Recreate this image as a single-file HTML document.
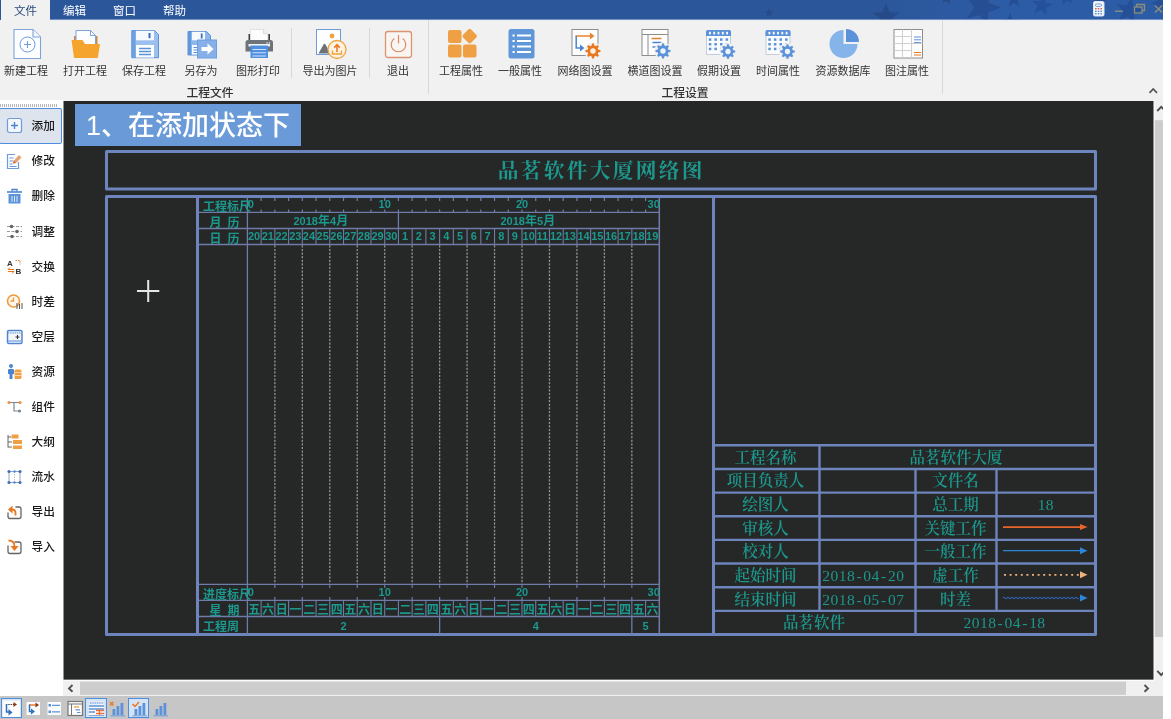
<!DOCTYPE html><html lang="zh"><head><meta charset="utf-8"><title>品茗软件大厦网络图</title><style>
html,body{margin:0;padding:0;background:#fff;}
body{width:1171px;height:719px;overflow:hidden;position:relative;font-family:"Liberation Sans","Noto Sans CJK SC",sans-serif;}
.abs{position:absolute;}
#app{position:absolute;left:0;top:0;width:1163px;height:719px;overflow:hidden;background:#f1f1f1;will-change:transform;}
#topbar{position:absolute;left:0;top:0;width:1163px;height:20px;background:linear-gradient(90deg,#2b569a 0,#2b569a 880px,#2d5ca6 1000px,#2d5ca6 1163px);overflow:hidden;}
.menu{position:absolute;top:0.5px;height:20px;line-height:20px;font-size:11.5px;color:#fff;white-space:nowrap;}
#tabfile{position:absolute;left:1px;top:0;width:49px;height:21px;background:#f1f1f1;color:#2a4a7c;text-align:center;line-height:22px;font-size:11.5px;}
#ribbon{position:absolute;left:0;top:20px;width:1163px;height:80px;background:#f1f1f1;}
.rb{position:absolute;top:0;width:80px;margin-left:-40px;text-align:center;}
.rb .lb{position:absolute;left:0;width:80px;top:44px;font-size:11px;color:#333;line-height:14px;text-align:center;white-space:nowrap;}
.rb svg{position:absolute;left:24.5px;top:8px;}
.grp{position:absolute;top:65.5px;font-size:11.8px;font-weight:500;color:#333;line-height:14px;white-space:nowrap;transform:translateX(-50%);}
.sep{position:absolute;width:1px;background:#d8d8d8;}
#side{position:absolute;left:0;top:100px;width:63px;height:596px;background:#fff;}
.si{position:absolute;left:0;width:62px;height:35px;}
.si .t{position:absolute;left:31.5px;top:11px;font-size:11.7px;line-height:14px;color:#1a1a1a;font-weight:500;white-space:nowrap;}
.si svg{position:absolute;left:6px;top:9.2px;}
#canvas{position:absolute;left:63px;top:101px;width:1090.7px;height:578.5px;background:#262727;overflow:hidden;}
#bottom{position:absolute;left:0;top:696px;width:1163px;height:23px;background:#c6c6c6;}
</style></head><body><div id="app">
<div id="topbar">
<svg class="abs" style="left:0;top:0" width="1163" height="20" viewBox="0 0 1163 20">
<polygon points="769,8.3 770.1,11.3 773.3,11.4 770.8,13.4 771.6,16.4 769,14.7 766.4,16.4 767.2,13.4 764.7,11.4 767.9,11.3" fill="#264b87"/>
<polygon points="886,3 889.5,12.2 899.3,12.7 891.6,18.8 894.2,28.3 886,22.9 877.8,28.3 880.4,18.8 872.7,12.7 882.5,12.2" fill="#264b88"/>
<polygon points="948.2,-8.9 949.1,-4 953.9,-3 949.6,-0.6 950.1,4.3 946.5,0.9 942,2.9 944.1,-1.6 940.8,-5.3 945.7,-4.6" fill="#264b88"/>
<polygon points="987.9,-10.6 988.5,2.8 1001,7.5 988.5,12.2 987.9,25.6 979.5,15.1 966.6,18.7 974,7.5 966.6,-3.7 979.5,-0.1" fill="#254e93"/>
<polygon points="1014,-10 1016.2,-4.1 1022.6,-3.8 1017.6,0.2 1019.3,6.3 1014,2.8 1008.7,6.3 1010.4,0.2 1005.4,-3.8 1011.8,-4.1" fill="#254e93"/>
<polygon points="1043.9,-5.2 1045.3,2.4 1052.9,4.1 1046.1,7.8 1046.8,15.5 1041.2,10.1 1034.1,13.2 1037.4,6.2 1032.3,0.4 1040,1.4" fill="#25509a"/>
<polygon points="1064.4,-11.9 1067.7,-6.4 1073.9,-7.2 1069.7,-2.5 1072.5,3.3 1066.7,0.7 1062.1,5.1 1062.7,-1.2 1057.1,-4.3 1063.3,-5.6" fill="#25509a"/>
<polygon points="1101,-12 1103,-4.5 1110.7,-3.5 1104.3,0.8 1105.7,8.4 1099.6,3.6 1092.8,7.3 1095.5,0 1089.9,-5.3 1097.6,-5" fill="#254f96"/>
<polygon points="1131.9,-2.7 1133.4,7.1 1142.9,9.5 1134.1,13.9 1134.7,23.8 1127.8,16.8 1118.6,20.4 1123.2,11.6 1116.9,4 1126.6,5.6" fill="#254f96"/>
<polygon points="1158.7,-4.9 1161.8,0.7 1168.1,0.1 1163.7,4.7 1166.3,10.5 1160.5,7.7 1155.8,11.9 1156.6,5.7 1151.1,2.4 1157.4,1.3" fill="#254f96"/>
<polygon points="1010,13 1012.2,18.9 1018.6,19.2 1013.6,23.2 1015.3,29.3 1010,25.8 1004.7,29.3 1006.4,23.2 1001.4,19.2 1007.8,18.9" fill="#254e93"/>
</svg>
<div id="tabfile">文件</div>
<div class="menu" style="left:63px">编辑</div>
<div class="menu" style="left:113px">窗口</div>
<div class="menu" style="left:163px">帮助</div>
<svg class="abs" style="left:1090px;top:0" width="73" height="20" viewBox="0 0 73 20"><rect x="3.5" y="1.5" width="10.5" height="14.5" rx="1.5" fill="#f4f6fa" stroke="#dfe6f2" stroke-width="1"/><rect x="5.5" y="4" width="6" height="2.4" rx="1" fill="#fff" stroke="#5b8fd6" stroke-width="0.9"/><g fill="#d0664a"><rect x="5" y="8" width="1.6" height="1.4"/><rect x="7.7" y="8" width="1.6" height="1.4"/><rect x="10.4" y="8" width="1.6" height="1.4"/></g><g fill="#5b8fd6"><rect x="5" y="10.6" width="1.6" height="1.4"/><rect x="7.7" y="10.6" width="1.6" height="1.4"/><rect x="10.4" y="10.6" width="1.6" height="1.4"/><rect x="5" y="13" width="1.6" height="1.4"/><rect x="7.7" y="13" width="1.6" height="1.4"/><rect x="10.4" y="13" width="1.6" height="1.4"/></g><rect x="25" y="10.5" width="8" height="1.4" fill="#8b8d7a"/><rect x="44.5" y="7" width="7.5" height="6" fill="none" stroke="#8b8d7a" stroke-width="1.3"/><path d="M46.5 7V4.5H54.5V10.5H52" fill="none" stroke="#8b8d7a" stroke-width="1.3"/><path d="M65 5.5l7 7M72 5.5l-7 7" stroke="#8b8d7a" stroke-width="1.5" fill="none"/></svg>
</div>
<div id="ribbon">
<div class="rb" style="left:26px"><svg width="32" height="32" viewBox="0 0 32 32"><path d="M3 1.5H22L29.5 9V30.5H3Z" fill="#fdfeff" stroke="#7fa3d8" stroke-width="1.1"/><path d="M22 1.5V9H29.5" fill="#f4f8fd" stroke="#7fa3d8" stroke-width="1.1"/><circle cx="16.5" cy="16.5" r="7.5" fill="none" stroke="#6f9bd8" stroke-width="1"/><path d="M16.5 13v7M13 16.5h7" stroke="#6f9bd8" stroke-width="1.1"/></svg><div class="lb">新建工程</div></div>
<div class="rb" style="left:85px"><svg width="32" height="32" viewBox="0 0 32 32"><path d="M4 8H6V19H4Z" fill="#c98a45"/><path d="M25.5 8H27.5V19H25.5Z" fill="#c98a45"/><path d="M6 2.5H20.5L25.5 7.5V20H6Z" fill="#fdfeff" stroke="#7fa3d8" stroke-width="1"/><path d="M20.5 2.5V7.5H25.5" fill="none" stroke="#7fa3d8" stroke-width="1"/><path d="M1.5 12H12.5L15 16H30L27.8 30H4Z" fill="#f5a52d"/></svg><div class="lb">打开工程</div></div>
<div class="rb" style="left:144px"><svg width="32" height="32" viewBox="0 0 32 32"><path d="M2.8 2.5H25.5L29.5 6.5V29.7H2.8Z" fill="#9cc0ee" stroke="#5b92d9" stroke-width="1"/><path d="M2.8 2.5H6.5V29.7H2.8Z" fill="#6a9fe0"/><rect x="7" y="2.8" width="18" height="9.5" fill="#f6f9fe"/><rect x="19.5" y="5" width="2" height="5.2" fill="#3f6fb6"/><rect x="7" y="17" width="18" height="12.5" fill="#fdfeff"/><path d="M10 20.5h12M10 23.5h12M10 26.5h12" stroke="#5b92d9" stroke-width="1.3"/></svg><div class="lb">保存工程</div></div>
<div class="rb" style="left:201px"><svg width="32" height="32" viewBox="0 0 32 32"><path d="M2 3.5H20.5L24.5 7.5V27H2Z" fill="#8db6ea" stroke="#5b92d9" stroke-width="1"/><path d="M2 3.5H5V27H2Z" fill="#5f97db"/><rect x="6" y="3.8" width="13" height="8.5" fill="#f6f9fe"/><rect x="14.8" y="5.5" width="1.8" height="5" fill="#3f6fb6"/><rect x="6" y="17" width="8" height="9.5" fill="#fdfeff"/><path d="M7.5 19.5h5M7.5 22h5M7.5 24.5h5" stroke="#5b92d9" stroke-width="1.1"/><rect x="11.5" y="12" width="19" height="18" fill="#85b0e8" stroke="#6a9fe0" stroke-width="1"/><path d="M15.5 19H21.5V15.5L27.5 21L21.5 26.5V23H15.5Z" fill="#fff"/></svg><div class="lb">另存为</div></div>
<div class="rb" style="left:258px"><svg width="32" height="32" viewBox="0 0 32 32"><path d="M5.5 6H7.2V13H5.5Z" fill="#3a3d42"/><path d="M25.2 6H27V13H25.2Z" fill="#3a3d42"/><path d="M7.5 1.5H20.5L24.8 5.8V13H7.5Z" fill="#fdfdfd" stroke="#dcdcdc" stroke-width="0.8"/><path d="M20.5 1.5V5.8H24.8" fill="#f0f0f0" stroke="#d4d4d4" stroke-width="0.8"/><path d="M2.5 14.5Q2.5 12 5 12H27.5Q30 12 30 14.5V23.5H2.5Z" fill="#6e7379"/><rect x="23.5" y="14.3" width="1.3" height="1.3" fill="#e8e8e8"/><rect x="25.8" y="14.3" width="1.3" height="1.3" fill="#e8e8e8"/><rect x="5.5" y="16" width="21.5" height="2.5" fill="#f4f4f4"/><rect x="7.5" y="17.5" width="17.5" height="12.5" fill="#4f8fe0"/><path d="M9.5 21.5h13.5M9.5 24.8h13.5M9.5 28h13.5" stroke="#cfe1f8" stroke-width="1.1"/></svg><div class="lb">图形打印</div></div>
<div class="rb" style="left:330px"><svg width="32" height="32" viewBox="0 0 32 32"><rect x="1.5" y="1.5" width="24" height="25" fill="#fdfeff" stroke="#6f9bd8" stroke-width="1"/><circle cx="17" cy="8" r="2.4" fill="#f0a43c"/><path d="M3.5 25.5L8.5 16.5Q9.5 15 10.5 16.5L15.5 25.5Z" fill="#6d727a"/><circle cx="22" cy="21.5" r="9" fill="#fdf3e3" stroke="#f0a13a" stroke-width="1.3"/><path d="M22 24V17M19.2 19.6L22 16.6L24.8 19.6" fill="none" stroke="#ee7a2a" stroke-width="1.6"/><path d="M17.5 22.5V26H26.5V22.5" fill="none" stroke="#f0a13a" stroke-width="1.4"/></svg><div class="lb">导出为图片</div></div>
<div class="rb" style="left:398px"><svg width="32" height="32" viewBox="0 0 32 32"><rect x="2.5" y="3.5" width="26" height="26" rx="2.5" fill="#f9f5f3" stroke="#dc946e" stroke-width="1.3"/><path d="M11.3 10.5A7.3 7.3 0 1 0 19.7 10.5" fill="none" stroke="#dc8a62" stroke-width="1.2"/><path d="M15.5 7V15.5" stroke="#dc8a62" stroke-width="1.2"/></svg><div class="lb">退出</div></div>
<div class="rb" style="left:461px"><svg width="32" height="32" viewBox="0 0 32 32"><rect x="2" y="2" width="13.5" height="13" rx="2" fill="#f0a044"/><rect x="2" y="16.5" width="13.5" height="13" rx="2" fill="#f0a044"/><rect x="17" y="16.5" width="13.5" height="13" rx="2" fill="#f0a044"/><rect x="18" y="2.5" width="11.4" height="11.4" rx="2" fill="#f0a044" transform="rotate(45 23.7 8.2)"/></svg><div class="lb">工程属性</div></div>
<div class="rb" style="left:520px"><svg width="32" height="32" viewBox="0 0 32 32"><rect x="3.5" y="1" width="26" height="29.5" rx="2.5" fill="#5f97d8"/><path d="M12 7.5h14M12 13h14M12 18.5h14M12 24h14" stroke="#fff" stroke-width="1.8"/><path d="M7.5 7.5h2.2M7.5 13h2.2M7.5 18.5h2.2M7.5 24h2.2" stroke="#fff" stroke-width="1.8"/></svg><div class="lb">一般属性</div></div>
<div class="rb" style="left:585px"><svg width="32" height="32" viewBox="0 0 32 32"><rect x="2" y="1.5" width="26" height="26" fill="#fdfdfd" stroke="#8e8e8e" stroke-width="1"/><path d="M5.5 8H21.5" stroke="#e8822c" stroke-width="1.5"/><path d="M20 4.5L24.5 8L20 11.5Z" fill="#e8822c"/><path d="M6.2 8V20H10.5" fill="none" stroke="#4a86d0" stroke-width="1.5"/><path d="M10 16.5L14.5 20L10 23.5Z" fill="#4a86d0"/><circle cx="23" cy="23" r="8.8" fill="#f1f1f1"/><polygon points="21.66,17.61 22.02,15.56 23.98,15.56 24.34,17.61 25.86,18.24 27.57,17.05 28.95,18.43 27.76,20.14 28.39,21.66 30.44,22.02 30.44,23.98 28.39,24.34 27.76,25.86 28.95,27.57 27.57,28.95 25.86,27.76 24.34,28.39 23.98,30.44 22.02,30.44 21.66,28.39 20.14,27.76 18.43,28.95 17.05,27.57 18.24,25.86 17.61,24.34 15.56,23.98 15.56,22.02 17.61,21.66 18.24,20.14 17.05,18.43 18.43,17.05 20.14,18.24" fill="#e8781f"/><circle cx="23" cy="23" r="2.7" fill="#fdf1e6"/></svg><div class="lb">网络图设置</div></div>
<div class="rb" style="left:655px"><svg width="32" height="32" viewBox="0 0 32 32"><rect x="2" y="1.5" width="26" height="26" fill="#fdfdfd" stroke="#8e8e8e" stroke-width="1"/><path d="M2 6.5H28M8 6.5V27.5" stroke="#8e8e8e" stroke-width="1"/><path d="M11.5 10.5H21.5" stroke="#e8822c" stroke-width="1.5"/><path d="M12.5 14.5H21.5" stroke="#4a86d0" stroke-width="1.5"/><path d="M12.5 19H16.5" stroke="#4a86d0" stroke-width="1.5"/><circle cx="23" cy="23" r="8.8" fill="#f1f1f1"/><polygon points="21.66,17.61 22.02,15.56 23.98,15.56 24.34,17.61 25.86,18.24 27.57,17.05 28.95,18.43 27.76,20.14 28.39,21.66 30.44,22.02 30.44,23.98 28.39,24.34 27.76,25.86 28.95,27.57 27.57,28.95 25.86,27.76 24.34,28.39 23.98,30.44 22.02,30.44 21.66,28.39 20.14,27.76 18.43,28.95 17.05,27.57 18.24,25.86 17.61,24.34 15.56,23.98 15.56,22.02 17.61,21.66 18.24,20.14 17.05,18.43 18.43,17.05 20.14,18.24" fill="#5b92d9"/><circle cx="23" cy="23" r="2.7" fill="#eef4fc"/></svg><div class="lb">横道图设置</div></div>
<div class="rb" style="left:719px"><svg width="32" height="32" viewBox="0 0 32 32"><g transform="translate(0 0)"><path d="M2.5 4V26.5H26.5V4" fill="#fafbfd" stroke="#c3ccd8" stroke-width="1"/><path d="M2 8V3.5Q2 2 3.5 2H25.5Q27 2 27 3.5V8Z" fill="#5b92d9"/><rect x="5" y="3.8" width="1.8" height="2.6" fill="#fff"/><rect x="9.3" y="3.8" width="1.8" height="2.6" fill="#fff"/><rect x="13.6" y="3.8" width="1.8" height="2.6" fill="#fff"/><rect x="17.9" y="3.8" width="1.8" height="2.6" fill="#fff"/><rect x="22.2" y="3.8" width="1.8" height="2.6" fill="#fff"/><rect x="4.8" y="10.3" width="2.5" height="2.5" fill="#5b92d9"/><rect x="10.4" y="10.3" width="2.5" height="2.5" fill="#5b92d9"/><rect x="16" y="10.3" width="2.5" height="2.5" fill="#5b92d9"/><rect x="21.6" y="10.3" width="2.5" height="2.5" fill="#5b92d9"/><rect x="4.8" y="15" width="2.5" height="2.5" fill="#5b92d9"/><rect x="10.4" y="15" width="2.5" height="2.5" fill="#5b92d9"/><rect x="16" y="15" width="2.5" height="2.5" fill="#5b92d9"/><rect x="21.6" y="15" width="2.5" height="2.5" fill="#5b92d9"/><rect x="4.8" y="19.7" width="2.5" height="2.5" fill="#5b92d9"/><rect x="10.4" y="19.7" width="2.5" height="2.5" fill="#5b92d9"/><rect x="16" y="19.7" width="2.5" height="2.5" fill="#5b92d9"/><rect x="21.6" y="19.7" width="2.5" height="2.5" fill="#5b92d9"/><circle cx="24" cy="23.5" r="8.6" fill="#f1f1f1"/><polygon points="22.69,18.26 23.05,16.26 24.95,16.26 25.31,18.26 26.78,18.87 28.44,17.71 29.79,19.06 28.63,20.72 29.24,22.19 31.24,22.55 31.24,24.45 29.24,24.81 28.63,26.28 29.79,27.94 28.44,29.29 26.78,28.13 25.31,28.74 24.95,30.74 23.05,30.74 22.69,28.74 21.22,28.13 19.56,29.29 18.21,27.94 19.37,26.28 18.76,24.81 16.76,24.45 16.76,22.55 18.76,22.19 19.37,20.72 18.21,19.06 19.56,17.71 21.22,18.87" fill="#5b92d9"/><circle cx="24" cy="23.5" r="2.63" fill="#eef4fc"/></g></svg><div class="lb">假期设置</div></div>
<div class="rb" style="left:778px"><svg width="32" height="32" viewBox="0 0 32 32"><g transform="translate(0.5 0)"><path d="M2.5 4V26.5H26.5V4" fill="#fafbfd" stroke="#c3ccd8" stroke-width="1"/><path d="M2 8V3.5Q2 2 3.5 2H25.5Q27 2 27 3.5V8Z" fill="#5b92d9"/><rect x="5" y="3.8" width="1.8" height="2.6" fill="#fff"/><rect x="9.3" y="3.8" width="1.8" height="2.6" fill="#fff"/><rect x="13.6" y="3.8" width="1.8" height="2.6" fill="#fff"/><rect x="17.9" y="3.8" width="1.8" height="2.6" fill="#fff"/><rect x="22.2" y="3.8" width="1.8" height="2.6" fill="#fff"/><rect x="4.8" y="10.3" width="2.5" height="2.5" fill="#5b92d9"/><rect x="10.4" y="10.3" width="2.5" height="2.5" fill="#5b92d9"/><rect x="16" y="10.3" width="2.5" height="2.5" fill="#5b92d9"/><rect x="21.6" y="10.3" width="2.5" height="2.5" fill="#5b92d9"/><rect x="4.8" y="15" width="2.5" height="2.5" fill="#5b92d9"/><rect x="10.4" y="15" width="2.5" height="2.5" fill="#5b92d9"/><rect x="16" y="15" width="2.5" height="2.5" fill="#5b92d9"/><rect x="21.6" y="15" width="2.5" height="2.5" fill="#5b92d9"/><rect x="4.8" y="19.7" width="2.5" height="2.5" fill="#5b92d9"/><rect x="10.4" y="19.7" width="2.5" height="2.5" fill="#5b92d9"/><rect x="16" y="19.7" width="2.5" height="2.5" fill="#5b92d9"/><rect x="21.6" y="19.7" width="2.5" height="2.5" fill="#5b92d9"/><circle cx="24" cy="23.5" r="8.6" fill="#f1f1f1"/><polygon points="22.69,18.26 23.05,16.26 24.95,16.26 25.31,18.26 26.78,18.87 28.44,17.71 29.79,19.06 28.63,20.72 29.24,22.19 31.24,22.55 31.24,24.45 29.24,24.81 28.63,26.28 29.79,27.94 28.44,29.29 26.78,28.13 25.31,28.74 24.95,30.74 23.05,30.74 22.69,28.74 21.22,28.13 19.56,29.29 18.21,27.94 19.37,26.28 18.76,24.81 16.76,24.45 16.76,22.55 18.76,22.19 19.37,20.72 18.21,19.06 19.56,17.71 21.22,18.87" fill="#5b92d9"/><circle cx="24" cy="23.5" r="2.63" fill="#eef4fc"/></g></svg><div class="lb">时间属性</div></div>
<div class="rb" style="left:843px"><svg width="32" height="32" viewBox="0 0 32 32"><path d="M15.5 16V2A14 14 0 1 0 29.5 16Z" fill="#85b4ea"/><path d="M18 1A13 13 0 0 1 31 14H18Z" fill="#5b92d9"/></svg><div class="lb">资源数据库</div></div>
<div class="rb" style="left:907px"><svg width="32" height="32" viewBox="0 0 32 32"><g transform="translate(-0.5 0)"><rect x="2.5" y="1.5" width="28.5" height="28.5" fill="#fdfdfd" stroke="#8e8e8e" stroke-width="1"/><path d="M11 1.5V30M20 1.5V30M2.5 8.5H20M2.5 15.5H31M2.5 22.5H20" stroke="#cfcfcf" stroke-width="1"/><path d="M22.5 9h7M22.5 11.8h7M22.5 14.6h7" stroke="#5b92d9" stroke-width="1"/><path d="M22.5 24.5h7M22.5 27h7" stroke="#e8781f" stroke-width="1.2"/></g></svg><div class="lb">图注属性</div></div>
<div class="grp" style="left:210px">工程文件</div><div class="grp" style="left:685px">工程设置</div>
<div class="sep" style="left:291px;top:8px;height:50px"></div>
<div class="sep" style="left:369px;top:8px;height:50px"></div>
<div class="sep" style="left:428px;top:0px;height:74px"></div>
<div class="sep" style="left:941.5px;top:0px;height:74px"></div>
<svg class="abs" style="left:1146px;top:65px" width="14" height="10" viewBox="0 0 14 10"><path d="M3.5 7.8L7.2 4L11 7.8" fill="none" stroke="#555" stroke-width="1.7"/></svg>
</div>
<div id="side">
<div class="abs" style="left:0;top:4px;width:58px;height:3px;background:repeating-linear-gradient(90deg,#b5b5b5 0,#b5b5b5 1px,#fff 1px,#fff 2px)"></div>
<div class="abs" style="left:-1px;top:8px;width:61px;height:34px;background:#dde4ee;border:1px solid #4d8fdc;border-radius:2px"></div>
<div class="si" style="top:8.3px"><svg width="18" height="18" viewBox="0 0 18 18"><rect x="1.5" y="1.5" width="14" height="14" rx="2" fill="#f4f8fd" stroke="#6f9bd8" stroke-width="1.2"/><path d="M8.5 5v7M5 8.5h7" stroke="#4a86d0" stroke-width="1.4"/></svg><div class="t">添加</div></div>
<div class="si" style="top:43.4px"><svg width="18" height="18" viewBox="0 0 18 18"><path d="M12.5 9V15.5H1.5V1.5H9" fill="#fafcff" stroke="#6f9bd8" stroke-width="1.2"/><path d="M3.5 5h4M3.5 8h4M3.5 11h3M3.5 13.5h7" stroke="#6f9bd8" stroke-width="1"/><path d="M7 10.5L8 7.5L13 2L15.5 4.5L10 10Z" fill="#e9a070"/><path d="M7 10.5L8 7.5L10 10Z" fill="#d46a35"/></svg><div class="t">修改</div></div>
<div class="si" style="top:78.4px"><svg width="18" height="18" viewBox="0 0 18 18"><path d="M1 4h15" stroke="#4a86d0" stroke-width="1.6"/><path d="M6 3.5V1.5h5v2" fill="none" stroke="#4a86d0" stroke-width="1.3"/><path d="M2.5 6h12v9.5h-12z" fill="#5b92d9"/><path d="M6 8v6M8.5 8v6M11 8v6" stroke="#dfeaf8" stroke-width="1"/></svg><div class="t">删除</div></div>
<div class="si" style="top:113.5px"><svg width="18" height="18" viewBox="0 0 18 18"><path d="M1 3.5h15M1 8.5h15M1 13.5h15" stroke="#9a9a9a" stroke-width="1" stroke-dasharray="3 1.5"/><circle cx="5.5" cy="3.5" r="1.8" fill="#666"/><circle cx="11" cy="8.5" r="1.8" fill="#666"/><circle cx="6" cy="13.5" r="1.8" fill="#666"/></svg><div class="t">调整</div></div>
<div class="si" style="top:148.6px"><svg width="18" height="18" viewBox="0 0 18 18"><text x="1" y="7.5" font-size="8" font-weight="bold" fill="#333" font-family="Liberation Sans,sans-serif">A</text><text x="9.5" y="16" font-size="8" font-weight="bold" fill="#333" font-family="Liberation Sans,sans-serif">B</text><path d="M9.5 2.5h4.5v4" fill="none" stroke="#e8781f" stroke-width="1" stroke-dasharray="1.5 1"/><path d="M2 11.5h6M2 11.5l2-2M8 13.5h-6M8 13.5l-2 2" fill="none" stroke="#e8781f" stroke-width="1"/></svg><div class="t">交换</div></div>
<div class="si" style="top:183.7px"><svg width="18" height="18" viewBox="0 0 18 18"><circle cx="7.5" cy="8" r="6" fill="#fff7ee" stroke="#ee9a3a" stroke-width="1.6"/><path d="M7.5 4.5V8H4.5" fill="none" stroke="#ee9a3a" stroke-width="1.4"/><path d="M11 10v6M13.5 11v5M16 10v6" stroke="#555" stroke-width="1"/></svg><div class="t">时差</div></div>
<div class="si" style="top:218.7px"><svg width="18" height="18" viewBox="0 0 18 18"><rect x="1.5" y="2.5" width="14.5" height="13" rx="1.5" fill="#f4f8fd" stroke="#4f86cf" stroke-width="1.5"/><path d="M2 5h13.5" stroke="#8fb3e6" stroke-width="1.5" stroke-dasharray="1.5 0.7"/><path d="M2 13h13.5" stroke="#8fb3e6" stroke-width="1.6"/><path d="M11.5 7v4M9.5 9h4" stroke="#333" stroke-width="1.1"/></svg><div class="t">空层</div></div>
<div class="si" style="top:253.8px"><svg width="18" height="18" viewBox="0 0 18 18"><circle cx="5" cy="3" r="2" fill="#4a86d0"/><path d="M2 6.5Q5 5 8 6.5V11H6.5V16H3.5V11H2Z" fill="#4a86d0"/><rect x="8.5" y="6.5" width="7" height="9.5" rx="1.5" fill="#f0a044"/><path d="M8.5 9.5h7M8.5 12.5h7" stroke="#fbe2c3" stroke-width="0.8"/></svg><div class="t">资源</div></div>
<div class="si" style="top:288.9px"><svg width="18" height="18" viewBox="0 0 18 18"><path d="M3 4.5h11M8 4.5V13h5" fill="none" stroke="#7a8696" stroke-width="1.2"/><circle cx="3" cy="4.5" r="1.6" fill="#e8914a"/><circle cx="14" cy="4.5" r="1.6" fill="#e8914a"/><circle cx="13.5" cy="13" r="1.6" fill="#7a8696"/></svg><div class="t">组件</div></div>
<div class="si" style="top:323.9px"><svg width="18" height="18" viewBox="0 0 18 18"><path d="M2 2v12.5M2 4h3M2 9h4M2 14h4" fill="none" stroke="#666" stroke-width="1"/><rect x="5.5" y="1.5" width="7" height="4" fill="#f0a044"/><rect x="7" y="7" width="9" height="4" fill="#f0a044"/><rect x="7" y="12.5" width="9" height="3.5" fill="#f0a044"/></svg><div class="t">大纲</div></div>
<div class="si" style="top:359px"><svg width="18" height="18" viewBox="0 0 18 18"><path d="M3 3.5h11v11h-11z" fill="none" stroke="#8fa5c8" stroke-width="1"/><path d="M8.5 3.5v11" stroke="#c8c8c8" stroke-width="1" stroke-dasharray="1.5 1"/><circle cx="3" cy="3.5" r="1.6" fill="#3f6fb6"/><circle cx="14" cy="3.5" r="1.6" fill="#3f6fb6"/><circle cx="3" cy="14.5" r="1.6" fill="#3f6fb6"/><circle cx="14" cy="14.5" r="1.6" fill="#3f6fb6"/><circle cx="8.5" cy="3.5" r="1.2" fill="#5b86c8"/><circle cx="8.5" cy="14.5" r="1.2" fill="#5b86c8"/></svg><div class="t">流水</div></div>
<div class="si" style="top:394.1px"><svg width="18" height="18" viewBox="0 0 18 18"><path d="M9.5 4H13Q15 4 15 6V13.5Q15 15.5 13 15.5H4Q2 15.5 2 13.5V9.5" fill="#fbfbfb" stroke="#666" stroke-width="1.3"/><path d="M9.5 12.5V10Q9.5 6.5 5.5 6.5" fill="none" stroke="#e8781f" stroke-width="1.8"/><path d="M2 6.5L6.5 2.5V10.5Z" fill="#e8781f"/></svg><div class="t">导出</div></div>
<div class="si" style="top:429.1px"><svg width="18" height="18" viewBox="0 0 18 18"><path d="M8.5 4H13Q15 4 15 6V13.5Q15 15.5 13 15.5H4Q2 15.5 2 13.5V7.5" fill="#fbfbfb" stroke="#666" stroke-width="1.3"/><path d="M2.5 2.5Q8.5 2.5 8.5 8.5" fill="none" stroke="#e8781f" stroke-width="1.8"/><path d="M4.5 8H12.5L8.5 13Z" fill="#e8781f"/></svg><div class="t">导入</div></div>
</div>
<div id="canvas"></div>
<div class="abs" style="left:75px;top:104px;width:226px;height:42px;background:#6a9bd8;color:#fff;font-size:27px;font-weight:500;line-height:41px;white-space:nowrap;"><span style="position:absolute;left:11px;top:2px">1、在添加状态下</span></div>
<svg class="abs" style="left:63px;top:100px" width="1091" height="580" viewBox="63 100 1091 580" font-family='Liberation Serif,Noto Serif CJK SC,serif'>
<rect x="106.5" y="151.5" width="989" height="37.5" fill="none" stroke="#6d84bc" stroke-width="3" stroke-linejoin="round"/>
<rect x="106.5" y="196.5" width="989" height="438" fill="none" stroke="#6d84bc" stroke-width="3" stroke-linejoin="round"/>
<line x1="197.5" y1="197.5" x2="197.5" y2="634.5" stroke="#6d84bc" stroke-width="3" />
<line x1="713.5" y1="197.5" x2="713.5" y2="634.5" stroke="#6d84bc" stroke-width="3" />
<text x="601.3" y="177.5" font-size="20.7" font-weight="bold" fill="#1c988d" text-anchor="middle" letter-spacing="2.3">品茗软件大厦网络图</text>
<line x1="199" y1="212.3" x2="659.3" y2="212.3" stroke="#6f7ba8" stroke-width="1.3" />
<line x1="199" y1="228.5" x2="659.3" y2="228.5" stroke="#6f7ba8" stroke-width="1.3" />
<line x1="199" y1="244.5" x2="659.3" y2="244.5" stroke="#6f7ba8" stroke-width="1.3" />
<line x1="199" y1="584.3" x2="659.3" y2="584.3" stroke="#6f7ba8" stroke-width="1.3" />
<line x1="199" y1="600.3" x2="659.3" y2="600.3" stroke="#6f7ba8" stroke-width="1.3" />
<line x1="199" y1="616.5" x2="659.3" y2="616.5" stroke="#6f7ba8" stroke-width="1.3" />
<line x1="247.4" y1="197.5" x2="247.4" y2="634.5" stroke="#6f7ba8" stroke-width="1.3" />
<line x1="659.3" y1="197.5" x2="659.3" y2="634.5" stroke="#6f7ba8" stroke-width="1.5" />
<line x1="261.13" y1="198" x2="261.13" y2="201" stroke="#6f7ba8" stroke-width="1.2" />
<line x1="261.13" y1="209.5" x2="261.13" y2="212.3" stroke="#6f7ba8" stroke-width="1.2" />
<line x1="261.13" y1="228.5" x2="261.13" y2="244.5" stroke="#6f7ba8" stroke-width="1.1" />
<line x1="261.13" y1="600.3" x2="261.13" y2="616.5" stroke="#6f7ba8" stroke-width="1.1" />
<line x1="274.86" y1="198" x2="274.86" y2="201" stroke="#6f7ba8" stroke-width="1.2" />
<line x1="274.86" y1="209.5" x2="274.86" y2="212.3" stroke="#6f7ba8" stroke-width="1.2" />
<line x1="274.86" y1="585" x2="274.86" y2="588" stroke="#6f7ba8" stroke-width="1.2" />
<line x1="274.86" y1="597" x2="274.86" y2="600.3" stroke="#6f7ba8" stroke-width="1.2" />
<line x1="274.86" y1="228.5" x2="274.86" y2="244.5" stroke="#6f7ba8" stroke-width="1.1" />
<line x1="274.86" y1="600.3" x2="274.86" y2="616.5" stroke="#6f7ba8" stroke-width="1.1" />
<line x1="288.59" y1="198" x2="288.59" y2="201" stroke="#6f7ba8" stroke-width="1.2" />
<line x1="288.59" y1="209.5" x2="288.59" y2="212.3" stroke="#6f7ba8" stroke-width="1.2" />
<line x1="288.59" y1="228.5" x2="288.59" y2="244.5" stroke="#6f7ba8" stroke-width="1.1" />
<line x1="288.59" y1="600.3" x2="288.59" y2="616.5" stroke="#6f7ba8" stroke-width="1.1" />
<line x1="302.32" y1="198" x2="302.32" y2="201" stroke="#6f7ba8" stroke-width="1.2" />
<line x1="302.32" y1="209.5" x2="302.32" y2="212.3" stroke="#6f7ba8" stroke-width="1.2" />
<line x1="302.32" y1="585" x2="302.32" y2="588" stroke="#6f7ba8" stroke-width="1.2" />
<line x1="302.32" y1="597" x2="302.32" y2="600.3" stroke="#6f7ba8" stroke-width="1.2" />
<line x1="302.32" y1="228.5" x2="302.32" y2="244.5" stroke="#6f7ba8" stroke-width="1.1" />
<line x1="302.32" y1="600.3" x2="302.32" y2="616.5" stroke="#6f7ba8" stroke-width="1.1" />
<line x1="316.05" y1="198" x2="316.05" y2="201" stroke="#6f7ba8" stroke-width="1.2" />
<line x1="316.05" y1="209.5" x2="316.05" y2="212.3" stroke="#6f7ba8" stroke-width="1.2" />
<line x1="316.05" y1="228.5" x2="316.05" y2="244.5" stroke="#6f7ba8" stroke-width="1.1" />
<line x1="316.05" y1="600.3" x2="316.05" y2="616.5" stroke="#6f7ba8" stroke-width="1.1" />
<line x1="329.78" y1="198" x2="329.78" y2="201" stroke="#6f7ba8" stroke-width="1.2" />
<line x1="329.78" y1="209.5" x2="329.78" y2="212.3" stroke="#6f7ba8" stroke-width="1.2" />
<line x1="329.78" y1="585" x2="329.78" y2="588" stroke="#6f7ba8" stroke-width="1.2" />
<line x1="329.78" y1="597" x2="329.78" y2="600.3" stroke="#6f7ba8" stroke-width="1.2" />
<line x1="329.78" y1="228.5" x2="329.78" y2="244.5" stroke="#6f7ba8" stroke-width="1.1" />
<line x1="329.78" y1="600.3" x2="329.78" y2="616.5" stroke="#6f7ba8" stroke-width="1.1" />
<line x1="343.51" y1="198" x2="343.51" y2="201" stroke="#6f7ba8" stroke-width="1.2" />
<line x1="343.51" y1="209.5" x2="343.51" y2="212.3" stroke="#6f7ba8" stroke-width="1.2" />
<line x1="343.51" y1="228.5" x2="343.51" y2="244.5" stroke="#6f7ba8" stroke-width="1.1" />
<line x1="343.51" y1="600.3" x2="343.51" y2="616.5" stroke="#6f7ba8" stroke-width="1.1" />
<line x1="357.24" y1="198" x2="357.24" y2="201" stroke="#6f7ba8" stroke-width="1.2" />
<line x1="357.24" y1="209.5" x2="357.24" y2="212.3" stroke="#6f7ba8" stroke-width="1.2" />
<line x1="357.24" y1="585" x2="357.24" y2="588" stroke="#6f7ba8" stroke-width="1.2" />
<line x1="357.24" y1="597" x2="357.24" y2="600.3" stroke="#6f7ba8" stroke-width="1.2" />
<line x1="357.24" y1="228.5" x2="357.24" y2="244.5" stroke="#6f7ba8" stroke-width="1.1" />
<line x1="357.24" y1="600.3" x2="357.24" y2="616.5" stroke="#6f7ba8" stroke-width="1.1" />
<line x1="370.97" y1="198" x2="370.97" y2="201" stroke="#6f7ba8" stroke-width="1.2" />
<line x1="370.97" y1="209.5" x2="370.97" y2="212.3" stroke="#6f7ba8" stroke-width="1.2" />
<line x1="370.97" y1="228.5" x2="370.97" y2="244.5" stroke="#6f7ba8" stroke-width="1.1" />
<line x1="370.97" y1="600.3" x2="370.97" y2="616.5" stroke="#6f7ba8" stroke-width="1.1" />
<line x1="384.7" y1="198" x2="384.7" y2="201" stroke="#6f7ba8" stroke-width="1.2" />
<line x1="384.7" y1="209.5" x2="384.7" y2="212.3" stroke="#6f7ba8" stroke-width="1.2" />
<line x1="384.7" y1="585" x2="384.7" y2="588" stroke="#6f7ba8" stroke-width="1.2" />
<line x1="384.7" y1="597" x2="384.7" y2="600.3" stroke="#6f7ba8" stroke-width="1.2" />
<line x1="384.7" y1="228.5" x2="384.7" y2="244.5" stroke="#6f7ba8" stroke-width="1.1" />
<line x1="384.7" y1="600.3" x2="384.7" y2="616.5" stroke="#6f7ba8" stroke-width="1.1" />
<line x1="398.43" y1="198" x2="398.43" y2="201" stroke="#6f7ba8" stroke-width="1.2" />
<line x1="398.43" y1="209.5" x2="398.43" y2="212.3" stroke="#6f7ba8" stroke-width="1.2" />
<line x1="398.43" y1="228.5" x2="398.43" y2="244.5" stroke="#6f7ba8" stroke-width="1.1" />
<line x1="398.43" y1="600.3" x2="398.43" y2="616.5" stroke="#6f7ba8" stroke-width="1.1" />
<line x1="412.16" y1="198" x2="412.16" y2="201" stroke="#6f7ba8" stroke-width="1.2" />
<line x1="412.16" y1="209.5" x2="412.16" y2="212.3" stroke="#6f7ba8" stroke-width="1.2" />
<line x1="412.16" y1="585" x2="412.16" y2="588" stroke="#6f7ba8" stroke-width="1.2" />
<line x1="412.16" y1="597" x2="412.16" y2="600.3" stroke="#6f7ba8" stroke-width="1.2" />
<line x1="412.16" y1="228.5" x2="412.16" y2="244.5" stroke="#6f7ba8" stroke-width="1.1" />
<line x1="412.16" y1="600.3" x2="412.16" y2="616.5" stroke="#6f7ba8" stroke-width="1.1" />
<line x1="425.89" y1="198" x2="425.89" y2="201" stroke="#6f7ba8" stroke-width="1.2" />
<line x1="425.89" y1="209.5" x2="425.89" y2="212.3" stroke="#6f7ba8" stroke-width="1.2" />
<line x1="425.89" y1="228.5" x2="425.89" y2="244.5" stroke="#6f7ba8" stroke-width="1.1" />
<line x1="425.89" y1="600.3" x2="425.89" y2="616.5" stroke="#6f7ba8" stroke-width="1.1" />
<line x1="439.62" y1="198" x2="439.62" y2="201" stroke="#6f7ba8" stroke-width="1.2" />
<line x1="439.62" y1="209.5" x2="439.62" y2="212.3" stroke="#6f7ba8" stroke-width="1.2" />
<line x1="439.62" y1="585" x2="439.62" y2="588" stroke="#6f7ba8" stroke-width="1.2" />
<line x1="439.62" y1="597" x2="439.62" y2="600.3" stroke="#6f7ba8" stroke-width="1.2" />
<line x1="439.62" y1="228.5" x2="439.62" y2="244.5" stroke="#6f7ba8" stroke-width="1.1" />
<line x1="439.62" y1="600.3" x2="439.62" y2="616.5" stroke="#6f7ba8" stroke-width="1.1" />
<line x1="453.35" y1="198" x2="453.35" y2="201" stroke="#6f7ba8" stroke-width="1.2" />
<line x1="453.35" y1="209.5" x2="453.35" y2="212.3" stroke="#6f7ba8" stroke-width="1.2" />
<line x1="453.35" y1="228.5" x2="453.35" y2="244.5" stroke="#6f7ba8" stroke-width="1.1" />
<line x1="453.35" y1="600.3" x2="453.35" y2="616.5" stroke="#6f7ba8" stroke-width="1.1" />
<line x1="467.08" y1="198" x2="467.08" y2="201" stroke="#6f7ba8" stroke-width="1.2" />
<line x1="467.08" y1="209.5" x2="467.08" y2="212.3" stroke="#6f7ba8" stroke-width="1.2" />
<line x1="467.08" y1="585" x2="467.08" y2="588" stroke="#6f7ba8" stroke-width="1.2" />
<line x1="467.08" y1="597" x2="467.08" y2="600.3" stroke="#6f7ba8" stroke-width="1.2" />
<line x1="467.08" y1="228.5" x2="467.08" y2="244.5" stroke="#6f7ba8" stroke-width="1.1" />
<line x1="467.08" y1="600.3" x2="467.08" y2="616.5" stroke="#6f7ba8" stroke-width="1.1" />
<line x1="480.81" y1="198" x2="480.81" y2="201" stroke="#6f7ba8" stroke-width="1.2" />
<line x1="480.81" y1="209.5" x2="480.81" y2="212.3" stroke="#6f7ba8" stroke-width="1.2" />
<line x1="480.81" y1="228.5" x2="480.81" y2="244.5" stroke="#6f7ba8" stroke-width="1.1" />
<line x1="480.81" y1="600.3" x2="480.81" y2="616.5" stroke="#6f7ba8" stroke-width="1.1" />
<line x1="494.54" y1="198" x2="494.54" y2="201" stroke="#6f7ba8" stroke-width="1.2" />
<line x1="494.54" y1="209.5" x2="494.54" y2="212.3" stroke="#6f7ba8" stroke-width="1.2" />
<line x1="494.54" y1="585" x2="494.54" y2="588" stroke="#6f7ba8" stroke-width="1.2" />
<line x1="494.54" y1="597" x2="494.54" y2="600.3" stroke="#6f7ba8" stroke-width="1.2" />
<line x1="494.54" y1="228.5" x2="494.54" y2="244.5" stroke="#6f7ba8" stroke-width="1.1" />
<line x1="494.54" y1="600.3" x2="494.54" y2="616.5" stroke="#6f7ba8" stroke-width="1.1" />
<line x1="508.27" y1="198" x2="508.27" y2="201" stroke="#6f7ba8" stroke-width="1.2" />
<line x1="508.27" y1="209.5" x2="508.27" y2="212.3" stroke="#6f7ba8" stroke-width="1.2" />
<line x1="508.27" y1="228.5" x2="508.27" y2="244.5" stroke="#6f7ba8" stroke-width="1.1" />
<line x1="508.27" y1="600.3" x2="508.27" y2="616.5" stroke="#6f7ba8" stroke-width="1.1" />
<line x1="522" y1="198" x2="522" y2="201" stroke="#6f7ba8" stroke-width="1.2" />
<line x1="522" y1="209.5" x2="522" y2="212.3" stroke="#6f7ba8" stroke-width="1.2" />
<line x1="522" y1="585" x2="522" y2="588" stroke="#6f7ba8" stroke-width="1.2" />
<line x1="522" y1="597" x2="522" y2="600.3" stroke="#6f7ba8" stroke-width="1.2" />
<line x1="522" y1="228.5" x2="522" y2="244.5" stroke="#6f7ba8" stroke-width="1.1" />
<line x1="522" y1="600.3" x2="522" y2="616.5" stroke="#6f7ba8" stroke-width="1.1" />
<line x1="535.73" y1="198" x2="535.73" y2="201" stroke="#6f7ba8" stroke-width="1.2" />
<line x1="535.73" y1="209.5" x2="535.73" y2="212.3" stroke="#6f7ba8" stroke-width="1.2" />
<line x1="535.73" y1="228.5" x2="535.73" y2="244.5" stroke="#6f7ba8" stroke-width="1.1" />
<line x1="535.73" y1="600.3" x2="535.73" y2="616.5" stroke="#6f7ba8" stroke-width="1.1" />
<line x1="549.46" y1="198" x2="549.46" y2="201" stroke="#6f7ba8" stroke-width="1.2" />
<line x1="549.46" y1="209.5" x2="549.46" y2="212.3" stroke="#6f7ba8" stroke-width="1.2" />
<line x1="549.46" y1="585" x2="549.46" y2="588" stroke="#6f7ba8" stroke-width="1.2" />
<line x1="549.46" y1="597" x2="549.46" y2="600.3" stroke="#6f7ba8" stroke-width="1.2" />
<line x1="549.46" y1="228.5" x2="549.46" y2="244.5" stroke="#6f7ba8" stroke-width="1.1" />
<line x1="549.46" y1="600.3" x2="549.46" y2="616.5" stroke="#6f7ba8" stroke-width="1.1" />
<line x1="563.19" y1="198" x2="563.19" y2="201" stroke="#6f7ba8" stroke-width="1.2" />
<line x1="563.19" y1="209.5" x2="563.19" y2="212.3" stroke="#6f7ba8" stroke-width="1.2" />
<line x1="563.19" y1="228.5" x2="563.19" y2="244.5" stroke="#6f7ba8" stroke-width="1.1" />
<line x1="563.19" y1="600.3" x2="563.19" y2="616.5" stroke="#6f7ba8" stroke-width="1.1" />
<line x1="576.92" y1="198" x2="576.92" y2="201" stroke="#6f7ba8" stroke-width="1.2" />
<line x1="576.92" y1="209.5" x2="576.92" y2="212.3" stroke="#6f7ba8" stroke-width="1.2" />
<line x1="576.92" y1="585" x2="576.92" y2="588" stroke="#6f7ba8" stroke-width="1.2" />
<line x1="576.92" y1="597" x2="576.92" y2="600.3" stroke="#6f7ba8" stroke-width="1.2" />
<line x1="576.92" y1="228.5" x2="576.92" y2="244.5" stroke="#6f7ba8" stroke-width="1.1" />
<line x1="576.92" y1="600.3" x2="576.92" y2="616.5" stroke="#6f7ba8" stroke-width="1.1" />
<line x1="590.65" y1="198" x2="590.65" y2="201" stroke="#6f7ba8" stroke-width="1.2" />
<line x1="590.65" y1="209.5" x2="590.65" y2="212.3" stroke="#6f7ba8" stroke-width="1.2" />
<line x1="590.65" y1="228.5" x2="590.65" y2="244.5" stroke="#6f7ba8" stroke-width="1.1" />
<line x1="590.65" y1="600.3" x2="590.65" y2="616.5" stroke="#6f7ba8" stroke-width="1.1" />
<line x1="604.38" y1="198" x2="604.38" y2="201" stroke="#6f7ba8" stroke-width="1.2" />
<line x1="604.38" y1="209.5" x2="604.38" y2="212.3" stroke="#6f7ba8" stroke-width="1.2" />
<line x1="604.38" y1="585" x2="604.38" y2="588" stroke="#6f7ba8" stroke-width="1.2" />
<line x1="604.38" y1="597" x2="604.38" y2="600.3" stroke="#6f7ba8" stroke-width="1.2" />
<line x1="604.38" y1="228.5" x2="604.38" y2="244.5" stroke="#6f7ba8" stroke-width="1.1" />
<line x1="604.38" y1="600.3" x2="604.38" y2="616.5" stroke="#6f7ba8" stroke-width="1.1" />
<line x1="618.11" y1="198" x2="618.11" y2="201" stroke="#6f7ba8" stroke-width="1.2" />
<line x1="618.11" y1="209.5" x2="618.11" y2="212.3" stroke="#6f7ba8" stroke-width="1.2" />
<line x1="618.11" y1="228.5" x2="618.11" y2="244.5" stroke="#6f7ba8" stroke-width="1.1" />
<line x1="618.11" y1="600.3" x2="618.11" y2="616.5" stroke="#6f7ba8" stroke-width="1.1" />
<line x1="631.84" y1="198" x2="631.84" y2="201" stroke="#6f7ba8" stroke-width="1.2" />
<line x1="631.84" y1="209.5" x2="631.84" y2="212.3" stroke="#6f7ba8" stroke-width="1.2" />
<line x1="631.84" y1="585" x2="631.84" y2="588" stroke="#6f7ba8" stroke-width="1.2" />
<line x1="631.84" y1="597" x2="631.84" y2="600.3" stroke="#6f7ba8" stroke-width="1.2" />
<line x1="631.84" y1="228.5" x2="631.84" y2="244.5" stroke="#6f7ba8" stroke-width="1.1" />
<line x1="631.84" y1="600.3" x2="631.84" y2="616.5" stroke="#6f7ba8" stroke-width="1.1" />
<line x1="645.57" y1="198" x2="645.57" y2="201" stroke="#6f7ba8" stroke-width="1.2" />
<line x1="645.57" y1="209.5" x2="645.57" y2="212.3" stroke="#6f7ba8" stroke-width="1.2" />
<line x1="645.57" y1="228.5" x2="645.57" y2="244.5" stroke="#6f7ba8" stroke-width="1.1" />
<line x1="645.57" y1="600.3" x2="645.57" y2="616.5" stroke="#6f7ba8" stroke-width="1.1" />
<line x1="274.86" y1="245.3" x2="274.86" y2="584" stroke="#909090" stroke-width="1.3" stroke-dasharray="2.2 1.4"/>
<line x1="302.32" y1="245.3" x2="302.32" y2="584" stroke="#909090" stroke-width="1.3" stroke-dasharray="2.2 1.4"/>
<line x1="329.78" y1="245.3" x2="329.78" y2="584" stroke="#909090" stroke-width="1.3" stroke-dasharray="2.2 1.4"/>
<line x1="357.24" y1="245.3" x2="357.24" y2="584" stroke="#909090" stroke-width="1.3" stroke-dasharray="2.2 1.4"/>
<line x1="384.7" y1="245.3" x2="384.7" y2="584" stroke="#909090" stroke-width="1.3" stroke-dasharray="2.2 1.4"/>
<line x1="412.16" y1="245.3" x2="412.16" y2="584" stroke="#909090" stroke-width="1.3" stroke-dasharray="2.2 1.4"/>
<line x1="439.62" y1="245.3" x2="439.62" y2="584" stroke="#909090" stroke-width="1.3" stroke-dasharray="2.2 1.4"/>
<line x1="467.08" y1="245.3" x2="467.08" y2="584" stroke="#909090" stroke-width="1.3" stroke-dasharray="2.2 1.4"/>
<line x1="494.54" y1="245.3" x2="494.54" y2="584" stroke="#909090" stroke-width="1.3" stroke-dasharray="2.2 1.4"/>
<line x1="522" y1="245.3" x2="522" y2="584" stroke="#909090" stroke-width="1.3" stroke-dasharray="2.2 1.4"/>
<line x1="549.46" y1="245.3" x2="549.46" y2="584" stroke="#909090" stroke-width="1.3" stroke-dasharray="2.2 1.4"/>
<line x1="576.92" y1="245.3" x2="576.92" y2="584" stroke="#909090" stroke-width="1.3" stroke-dasharray="2.2 1.4"/>
<line x1="604.38" y1="245.3" x2="604.38" y2="584" stroke="#909090" stroke-width="1.3" stroke-dasharray="2.2 1.4"/>
<line x1="631.84" y1="245.3" x2="631.84" y2="584" stroke="#909090" stroke-width="1.3" stroke-dasharray="2.2 1.4"/>
<line x1="398.43" y1="212.3" x2="398.43" y2="228.5" stroke="#6f7ba8" stroke-width="1.3" />
<line x1="439.62" y1="616.5" x2="439.62" y2="634.5" stroke="#6f7ba8" stroke-width="1.3" />
<line x1="631.84" y1="616.5" x2="631.84" y2="634.5" stroke="#6f7ba8" stroke-width="1.3" />
<text x="203" y="211" font-size="12" font-weight="bold" fill="#1c988d" text-anchor="start" font-family="Liberation Sans,Noto Sans CJK SC,sans-serif" >工程标尺</text>
<text x="209.5" y="226.5" font-size="12" font-weight="bold" fill="#1c988d" text-anchor="start" font-family="Liberation Sans,Noto Sans CJK SC,sans-serif" >月</text>
<text x="227.5" y="226.5" font-size="12" font-weight="bold" fill="#1c988d" text-anchor="start" font-family="Liberation Sans,Noto Sans CJK SC,sans-serif" >历</text>
<text x="209.5" y="243" font-size="12" font-weight="bold" fill="#1c988d" text-anchor="start" font-family="Liberation Sans,Noto Sans CJK SC,sans-serif" >日</text>
<text x="227.5" y="243" font-size="12" font-weight="bold" fill="#1c988d" text-anchor="start" font-family="Liberation Sans,Noto Sans CJK SC,sans-serif" >历</text>
<text x="203" y="599" font-size="12" font-weight="bold" fill="#1c988d" text-anchor="start" font-family="Liberation Sans,Noto Sans CJK SC,sans-serif" >进度标尺</text>
<text x="209.5" y="614.8" font-size="12" font-weight="bold" fill="#1c988d" text-anchor="start" font-family="Liberation Sans,Noto Sans CJK SC,sans-serif" >星</text>
<text x="227.5" y="614.8" font-size="12" font-weight="bold" fill="#1c988d" text-anchor="start" font-family="Liberation Sans,Noto Sans CJK SC,sans-serif" >期</text>
<text x="203" y="631" font-size="12" font-weight="bold" fill="#1c988d" text-anchor="start" font-family="Liberation Sans,Noto Sans CJK SC,sans-serif" >工程周</text>
<text x="247.7" y="208" font-size="11" font-weight="bold" fill="#1c988d" text-anchor="start" font-family="Liberation Sans,sans-serif">0</text>
<text x="384.7" y="208" font-size="11" font-weight="bold" fill="#1c988d" text-anchor="middle" font-family="Liberation Sans,sans-serif">10</text>
<text x="522" y="208" font-size="11" font-weight="bold" fill="#1c988d" text-anchor="middle" font-family="Liberation Sans,sans-serif">20</text>
<text x="659.8" y="208" font-size="11" font-weight="bold" fill="#1c988d" text-anchor="end" font-family="Liberation Sans,sans-serif">30</text>
<text x="247.7" y="596" font-size="11" font-weight="bold" fill="#1c988d" text-anchor="start" font-family="Liberation Sans,sans-serif">0</text>
<text x="384.7" y="596" font-size="11" font-weight="bold" fill="#1c988d" text-anchor="middle" font-family="Liberation Sans,sans-serif">10</text>
<text x="522" y="596" font-size="11" font-weight="bold" fill="#1c988d" text-anchor="middle" font-family="Liberation Sans,sans-serif">20</text>
<text x="659.8" y="596" font-size="11" font-weight="bold" fill="#1c988d" text-anchor="end" font-family="Liberation Sans,sans-serif">30</text>
<text x="293.5" y="225" font-size="12" font-weight="bold" fill="#1c988d" font-family="Liberation Sans,Noto Sans CJK SC,sans-serif"><tspan font-family="Liberation Sans,sans-serif" font-size="11">2018</tspan>年<tspan font-family="Liberation Sans,sans-serif" font-size="11">4</tspan>月</text>
<text x="500.5" y="225" font-size="12" font-weight="bold" fill="#1c988d" font-family="Liberation Sans,Noto Sans CJK SC,sans-serif"><tspan font-family="Liberation Sans,sans-serif" font-size="11">2018</tspan>年<tspan font-family="Liberation Sans,sans-serif" font-size="11">5</tspan>月</text>
<text x="254.07" y="240" font-size="11" font-weight="bold" fill="#1c988d" text-anchor="middle" font-family="Liberation Sans,sans-serif">20</text>
<text x="267.8" y="240" font-size="11" font-weight="bold" fill="#1c988d" text-anchor="middle" font-family="Liberation Sans,sans-serif">21</text>
<text x="281.53" y="240" font-size="11" font-weight="bold" fill="#1c988d" text-anchor="middle" font-family="Liberation Sans,sans-serif">22</text>
<text x="295.25" y="240" font-size="11" font-weight="bold" fill="#1c988d" text-anchor="middle" font-family="Liberation Sans,sans-serif">23</text>
<text x="308.99" y="240" font-size="11" font-weight="bold" fill="#1c988d" text-anchor="middle" font-family="Liberation Sans,sans-serif">24</text>
<text x="322.72" y="240" font-size="11" font-weight="bold" fill="#1c988d" text-anchor="middle" font-family="Liberation Sans,sans-serif">25</text>
<text x="336.44" y="240" font-size="11" font-weight="bold" fill="#1c988d" text-anchor="middle" font-family="Liberation Sans,sans-serif">26</text>
<text x="350.18" y="240" font-size="11" font-weight="bold" fill="#1c988d" text-anchor="middle" font-family="Liberation Sans,sans-serif">27</text>
<text x="363.91" y="240" font-size="11" font-weight="bold" fill="#1c988d" text-anchor="middle" font-family="Liberation Sans,sans-serif">28</text>
<text x="377.64" y="240" font-size="11" font-weight="bold" fill="#1c988d" text-anchor="middle" font-family="Liberation Sans,sans-serif">29</text>
<text x="391.37" y="240" font-size="11" font-weight="bold" fill="#1c988d" text-anchor="middle" font-family="Liberation Sans,sans-serif">30</text>
<text x="405.1" y="240" font-size="11" font-weight="bold" fill="#1c988d" text-anchor="middle" font-family="Liberation Sans,sans-serif">1</text>
<text x="418.82" y="240" font-size="11" font-weight="bold" fill="#1c988d" text-anchor="middle" font-family="Liberation Sans,sans-serif">2</text>
<text x="432.56" y="240" font-size="11" font-weight="bold" fill="#1c988d" text-anchor="middle" font-family="Liberation Sans,sans-serif">3</text>
<text x="446.29" y="240" font-size="11" font-weight="bold" fill="#1c988d" text-anchor="middle" font-family="Liberation Sans,sans-serif">4</text>
<text x="460.02" y="240" font-size="11" font-weight="bold" fill="#1c988d" text-anchor="middle" font-family="Liberation Sans,sans-serif">5</text>
<text x="473.75" y="240" font-size="11" font-weight="bold" fill="#1c988d" text-anchor="middle" font-family="Liberation Sans,sans-serif">6</text>
<text x="487.48" y="240" font-size="11" font-weight="bold" fill="#1c988d" text-anchor="middle" font-family="Liberation Sans,sans-serif">7</text>
<text x="501.2" y="240" font-size="11" font-weight="bold" fill="#1c988d" text-anchor="middle" font-family="Liberation Sans,sans-serif">8</text>
<text x="514.93" y="240" font-size="11" font-weight="bold" fill="#1c988d" text-anchor="middle" font-family="Liberation Sans,sans-serif">9</text>
<text x="528.66" y="240" font-size="11" font-weight="bold" fill="#1c988d" text-anchor="middle" font-family="Liberation Sans,sans-serif">10</text>
<text x="542.39" y="240" font-size="11" font-weight="bold" fill="#1c988d" text-anchor="middle" font-family="Liberation Sans,sans-serif">11</text>
<text x="556.12" y="240" font-size="11" font-weight="bold" fill="#1c988d" text-anchor="middle" font-family="Liberation Sans,sans-serif">12</text>
<text x="569.86" y="240" font-size="11" font-weight="bold" fill="#1c988d" text-anchor="middle" font-family="Liberation Sans,sans-serif">13</text>
<text x="583.58" y="240" font-size="11" font-weight="bold" fill="#1c988d" text-anchor="middle" font-family="Liberation Sans,sans-serif">14</text>
<text x="597.31" y="240" font-size="11" font-weight="bold" fill="#1c988d" text-anchor="middle" font-family="Liberation Sans,sans-serif">15</text>
<text x="611.04" y="240" font-size="11" font-weight="bold" fill="#1c988d" text-anchor="middle" font-family="Liberation Sans,sans-serif">16</text>
<text x="624.77" y="240" font-size="11" font-weight="bold" fill="#1c988d" text-anchor="middle" font-family="Liberation Sans,sans-serif">17</text>
<text x="638.5" y="240" font-size="11" font-weight="bold" fill="#1c988d" text-anchor="middle" font-family="Liberation Sans,sans-serif">18</text>
<text x="652.24" y="240" font-size="11" font-weight="bold" fill="#1c988d" text-anchor="middle" font-family="Liberation Sans,sans-serif">19</text>
<text x="254.27" y="613.8" font-size="12" font-weight="bold" fill="#1c988d" text-anchor="middle" font-family="Liberation Sans,Noto Sans CJK SC,sans-serif" >五</text>
<text x="268" y="613.8" font-size="12" font-weight="bold" fill="#1c988d" text-anchor="middle" font-family="Liberation Sans,Noto Sans CJK SC,sans-serif" >六</text>
<text x="281.73" y="613.8" font-size="12" font-weight="bold" fill="#1c988d" text-anchor="middle" font-family="Liberation Sans,Noto Sans CJK SC,sans-serif" >日</text>
<text x="295.45" y="613.8" font-size="12" font-weight="bold" fill="#1c988d" text-anchor="middle" font-family="Liberation Sans,Noto Sans CJK SC,sans-serif" >一</text>
<text x="309.19" y="613.8" font-size="12" font-weight="bold" fill="#1c988d" text-anchor="middle" font-family="Liberation Sans,Noto Sans CJK SC,sans-serif" >二</text>
<text x="322.92" y="613.8" font-size="12" font-weight="bold" fill="#1c988d" text-anchor="middle" font-family="Liberation Sans,Noto Sans CJK SC,sans-serif" >三</text>
<text x="336.64" y="613.8" font-size="12" font-weight="bold" fill="#1c988d" text-anchor="middle" font-family="Liberation Sans,Noto Sans CJK SC,sans-serif" >四</text>
<text x="350.38" y="613.8" font-size="12" font-weight="bold" fill="#1c988d" text-anchor="middle" font-family="Liberation Sans,Noto Sans CJK SC,sans-serif" >五</text>
<text x="364.11" y="613.8" font-size="12" font-weight="bold" fill="#1c988d" text-anchor="middle" font-family="Liberation Sans,Noto Sans CJK SC,sans-serif" >六</text>
<text x="377.84" y="613.8" font-size="12" font-weight="bold" fill="#1c988d" text-anchor="middle" font-family="Liberation Sans,Noto Sans CJK SC,sans-serif" >日</text>
<text x="391.56" y="613.8" font-size="12" font-weight="bold" fill="#1c988d" text-anchor="middle" font-family="Liberation Sans,Noto Sans CJK SC,sans-serif" >一</text>
<text x="405.3" y="613.8" font-size="12" font-weight="bold" fill="#1c988d" text-anchor="middle" font-family="Liberation Sans,Noto Sans CJK SC,sans-serif" >二</text>
<text x="419.02" y="613.8" font-size="12" font-weight="bold" fill="#1c988d" text-anchor="middle" font-family="Liberation Sans,Noto Sans CJK SC,sans-serif" >三</text>
<text x="432.75" y="613.8" font-size="12" font-weight="bold" fill="#1c988d" text-anchor="middle" font-family="Liberation Sans,Noto Sans CJK SC,sans-serif" >四</text>
<text x="446.49" y="613.8" font-size="12" font-weight="bold" fill="#1c988d" text-anchor="middle" font-family="Liberation Sans,Noto Sans CJK SC,sans-serif" >五</text>
<text x="460.22" y="613.8" font-size="12" font-weight="bold" fill="#1c988d" text-anchor="middle" font-family="Liberation Sans,Noto Sans CJK SC,sans-serif" >六</text>
<text x="473.95" y="613.8" font-size="12" font-weight="bold" fill="#1c988d" text-anchor="middle" font-family="Liberation Sans,Noto Sans CJK SC,sans-serif" >日</text>
<text x="487.68" y="613.8" font-size="12" font-weight="bold" fill="#1c988d" text-anchor="middle" font-family="Liberation Sans,Noto Sans CJK SC,sans-serif" >一</text>
<text x="501.4" y="613.8" font-size="12" font-weight="bold" fill="#1c988d" text-anchor="middle" font-family="Liberation Sans,Noto Sans CJK SC,sans-serif" >二</text>
<text x="515.13" y="613.8" font-size="12" font-weight="bold" fill="#1c988d" text-anchor="middle" font-family="Liberation Sans,Noto Sans CJK SC,sans-serif" >三</text>
<text x="528.87" y="613.8" font-size="12" font-weight="bold" fill="#1c988d" text-anchor="middle" font-family="Liberation Sans,Noto Sans CJK SC,sans-serif" >四</text>
<text x="542.6" y="613.8" font-size="12" font-weight="bold" fill="#1c988d" text-anchor="middle" font-family="Liberation Sans,Noto Sans CJK SC,sans-serif" >五</text>
<text x="556.33" y="613.8" font-size="12" font-weight="bold" fill="#1c988d" text-anchor="middle" font-family="Liberation Sans,Noto Sans CJK SC,sans-serif" >六</text>
<text x="570.06" y="613.8" font-size="12" font-weight="bold" fill="#1c988d" text-anchor="middle" font-family="Liberation Sans,Noto Sans CJK SC,sans-serif" >日</text>
<text x="583.78" y="613.8" font-size="12" font-weight="bold" fill="#1c988d" text-anchor="middle" font-family="Liberation Sans,Noto Sans CJK SC,sans-serif" >一</text>
<text x="597.51" y="613.8" font-size="12" font-weight="bold" fill="#1c988d" text-anchor="middle" font-family="Liberation Sans,Noto Sans CJK SC,sans-serif" >二</text>
<text x="611.25" y="613.8" font-size="12" font-weight="bold" fill="#1c988d" text-anchor="middle" font-family="Liberation Sans,Noto Sans CJK SC,sans-serif" >三</text>
<text x="624.98" y="613.8" font-size="12" font-weight="bold" fill="#1c988d" text-anchor="middle" font-family="Liberation Sans,Noto Sans CJK SC,sans-serif" >四</text>
<text x="638.71" y="613.8" font-size="12" font-weight="bold" fill="#1c988d" text-anchor="middle" font-family="Liberation Sans,Noto Sans CJK SC,sans-serif" >五</text>
<text x="652.44" y="613.8" font-size="12" font-weight="bold" fill="#1c988d" text-anchor="middle" font-family="Liberation Sans,Noto Sans CJK SC,sans-serif" >六</text>
<text x="343.51" y="630" font-size="11" font-weight="bold" fill="#1c988d" text-anchor="middle" font-family="Liberation Sans,sans-serif">2</text>
<text x="535.73" y="630" font-size="11" font-weight="bold" fill="#1c988d" text-anchor="middle" font-family="Liberation Sans,sans-serif">4</text>
<text x="645.57" y="630" font-size="11" font-weight="bold" fill="#1c988d" text-anchor="middle" font-family="Liberation Sans,sans-serif">5</text>
<line x1="148.2" y1="280" x2="148.2" y2="302" stroke="#e6e6e6" stroke-width="2" />
<line x1="137" y1="291" x2="159.3" y2="291" stroke="#e6e6e6" stroke-width="2" />
<line x1="714" y1="445.3" x2="1095" y2="445.3" stroke="#6d84bc" stroke-width="2.4" />
<line x1="714" y1="468.95" x2="1095" y2="468.95" stroke="#6d84bc" stroke-width="2.4" />
<line x1="714" y1="492.6" x2="1095" y2="492.6" stroke="#6d84bc" stroke-width="2.4" />
<line x1="714" y1="516.25" x2="1095" y2="516.25" stroke="#6d84bc" stroke-width="2.4" />
<line x1="714" y1="539.9" x2="1095" y2="539.9" stroke="#6d84bc" stroke-width="2.4" />
<line x1="714" y1="563.55" x2="1095" y2="563.55" stroke="#6d84bc" stroke-width="2.4" />
<line x1="714" y1="587.2" x2="1095" y2="587.2" stroke="#6d84bc" stroke-width="2.4" />
<line x1="714" y1="610.85" x2="1095" y2="610.85" stroke="#6d84bc" stroke-width="2.4" />
<line x1="819.5" y1="445.3" x2="819.5" y2="610.85" stroke="#6d84bc" stroke-width="2.4" />
<line x1="915.5" y1="468.95" x2="915.5" y2="634.5" stroke="#6d84bc" stroke-width="2.4" />
<line x1="996.5" y1="468.95" x2="996.5" y2="610.85" stroke="#6d84bc" stroke-width="2.4" />
<text x="765.6" y="462.8" font-size="15.5" font-weight="600" fill="#1c988d" text-anchor="middle" letter-spacing="0">工程名称</text>
<text x="765.6" y="486.45" font-size="15.5" font-weight="600" fill="#1c988d" text-anchor="middle" letter-spacing="0">项目负责人</text>
<text x="765.6" y="510.1" font-size="15.5" font-weight="600" fill="#1c988d" text-anchor="middle" letter-spacing="0">绘图人</text>
<text x="765.6" y="533.75" font-size="15.5" font-weight="600" fill="#1c988d" text-anchor="middle" letter-spacing="0">审核人</text>
<text x="765.6" y="557.4" font-size="15.5" font-weight="600" fill="#1c988d" text-anchor="middle" letter-spacing="0">校对人</text>
<text x="765.6" y="581.05" font-size="15.5" font-weight="600" fill="#1c988d" text-anchor="middle" letter-spacing="0">起始时间</text>
<text x="765.6" y="604.7" font-size="15.5" font-weight="600" fill="#1c988d" text-anchor="middle" letter-spacing="0">结束时间</text>
<text x="956" y="462.8" font-size="15.5" font-weight="600" fill="#1c988d" text-anchor="middle" letter-spacing="0">品茗软件大厦</text>
<text x="955.5" y="486.45" font-size="15.5" font-weight="600" fill="#1c988d" text-anchor="middle" letter-spacing="0">文件名</text>
<text x="955.5" y="510.1" font-size="15.5" font-weight="600" fill="#1c988d" text-anchor="middle" letter-spacing="0">总工期</text>
<text x="955.5" y="533.75" font-size="15.5" font-weight="600" fill="#1c988d" text-anchor="middle" letter-spacing="0">关键工作</text>
<text x="955.5" y="557.4" font-size="15.5" font-weight="600" fill="#1c988d" text-anchor="middle" letter-spacing="0">一般工作</text>
<text x="955.5" y="581.05" font-size="15.5" font-weight="600" fill="#1c988d" text-anchor="middle" letter-spacing="0">虚工作</text>
<text x="955.5" y="604.7" font-size="15.5" font-weight="600" fill="#1c988d" text-anchor="middle" letter-spacing="0">时差</text>
<text x="1041.5 1049.7" y="510.1" font-size="15.5" fill="#1c988d" text-anchor="middle">18</text>
<text x="826.2 834.4 842.6 850.8 859 867.2 875.4 883.6 891.8 900" y="581.05" font-size="15.5" fill="#1c988d" text-anchor="middle">2018-04-20</text>
<text x="826.2 834.4 842.6 850.8 859 867.2 875.4 883.6 891.8 900" y="604.7" font-size="15.5" fill="#1c988d" text-anchor="middle">2018-05-07</text>
<text x="814" y="628.35" font-size="15.5" font-weight="600" fill="#1c988d" text-anchor="middle" letter-spacing="0">品茗软件</text>
<text x="967.4 975.6 983.8 992 1000.2 1008.4 1016.6 1024.8 1033 1041.2" y="628.35" font-size="15.5" fill="#1c988d" text-anchor="middle">2018-04-18</text>
<line x1="1003" y1="527.05" x2="1083" y2="527.05" stroke="#e8662a" stroke-width="1.8" />
<path d="M1080 524.05 L1087.5 527.05 L1080 530.05 Z" fill="#e8662a"/>
<line x1="1003" y1="550.7" x2="1083" y2="550.7" stroke="#2e86d8" stroke-width="1.3" />
<path d="M1080 547.2 L1087.5 550.7 L1080 554.2 Z" fill="#2e86d8"/>
<line x1="1004" y1="574.85" x2="1080" y2="574.85" stroke="#f0b27c" stroke-width="1.6" stroke-dasharray="2 3.6"/>
<path d="M1080 571.35 L1087.5 574.85 L1080 578.35 Z" fill="#f0b27c"/>
<path d="M1003 598 q1 -1.6 2 0 t2 0 q1 -1.6 2 0 t2 0 q1 -1.6 2 0 t2 0 q1 -1.6 2 0 t2 0 q1 -1.6 2 0 t2 0 q1 -1.6 2 0 t2 0 q1 -1.6 2 0 t2 0 q1 -1.6 2 0 t2 0 q1 -1.6 2 0 t2 0 q1 -1.6 2 0 t2 0 q1 -1.6 2 0 t2 0 q1 -1.6 2 0 t2 0 q1 -1.6 2 0 t2 0 q1 -1.6 2 0 t2 0 q1 -1.6 2 0 t2 0 q1 -1.6 2 0 t2 0 q1 -1.6 2 0 t2 0 q1 -1.6 2 0 t2 0 q1 -1.6 2 0 t2 0" fill="none" stroke="#2f64b4" stroke-width="1.1"/>
<path d="M1080 594.5 L1087.5 598 L1080 601.5 Z" fill="#2e86d8"/>
</svg>
<svg class="abs" style="left:0;top:0" width="1163" height="719" viewBox="0 0 1163 719"><rect x="63" y="677" width="1090.7" height="2.8" fill="#262727"/><rect x="62" y="100.6" width="1.5" height="595" fill="#fff"/><rect x="50" y="19.6" width="1113" height="1" fill="#e2e8f4"/><rect x="1153.7" y="100.5" width="10" height="596.1" fill="#f0f0f0"/><rect x="1153.7" y="100.5" width="0.9" height="580" fill="#fcfcfc"/><rect x="63" y="679.8" width="1091" height="16.8" fill="#f0f0f0"/><rect x="0" y="695" width="63" height="1.6" fill="#fff"/><rect x="63" y="679.8" width="1091" height="1.2" fill="#fcfcfc"/><rect x="1154.8" y="120.2" width="9" height="516.8" fill="#cdcdcd"/><rect x="80" y="681.6" width="1046" height="13.3" fill="#cdcdcd"/><path d="M1157.2 111L1161.2 106.8L1165.2 111" fill="none" stroke="#505050" stroke-width="1.9"/><path d="M1157.2 670.8L1161.2 675L1165.2 670.8" fill="none" stroke="#505050" stroke-width="1.9"/><path d="M72.5 685L69 688.4L72.5 691.8" fill="none" stroke="#505050" stroke-width="1.9"/><path d="M1144.5 685L1148 688.4L1144.5 691.8" fill="none" stroke="#505050" stroke-width="1.9"/></svg>
<div id="bottom">
<div class="abs" style="left:0.5px;top:1.5px;width:21.5px;height:20.5px;background:#d5e3f5;border:1px solid #4d8fdc;box-sizing:border-box"></div><svg class="abs" style="left:1.3px;top:1.5px" width="20" height="21" viewBox="0 0 20 21"><rect x="1.5" y="2.5" width="17.5" height="16.5" fill="#fcfcfc"/><path d="M5 6.5h8" stroke="#333" stroke-width="1.2" stroke-dasharray="1.3 1"/><path d="M12.5 4L16 6.5L12.5 9Z" fill="#8a3a1a"/><path d="M5.5 6v8h3" fill="none" stroke="#2f6fc0" stroke-width="1.5"/><path d="M7.5 11L11.5 14.5L7.5 17.5Z" fill="#2f6fc0"/></svg>
<svg class="abs" style="left:22.5px;top:1.5px" width="20" height="21" viewBox="0 0 20 21"><rect x="3.5" y="4" width="13.5" height="13" fill="#fcfcfc"/><path d="M6 7h7" stroke="#e8781f" stroke-width="1.4"/><path d="M12.5 4.5L16 7L12.5 9.5Z" fill="#8a3a1a"/><path d="M6.5 6.5v7h2.5" fill="none" stroke="#2f6fc0" stroke-width="1.5"/><path d="M8 10.5L12 13.5L8 16.5Z" fill="#2f6fc0"/></svg>
<svg class="abs" style="left:43.7px;top:1.5px" width="20" height="21" viewBox="0 0 20 21"><rect x="3.5" y="4" width="13.5" height="13" fill="#fcfcfc"/><rect x="4.5" y="6" width="2.5" height="2.5" fill="#5b92d9"/><rect x="4.5" y="12.5" width="2.5" height="2.5" fill="#5b92d9"/><path d="M8 7.3h8M8 13.8h8" stroke="#5b92d9" stroke-width="1.3"/></svg>
<svg class="abs" style="left:64.9px;top:1.5px" width="20" height="21" viewBox="0 0 20 21"><rect x="3" y="3.5" width="14.5" height="14" fill="#fcfcfc" stroke="#777" stroke-width="1.2"/><path d="M3 6h14.5M6.5 6v11.5" stroke="#777" stroke-width="1"/><path d="M9 9h5" stroke="#f0a13a" stroke-width="1.3"/><path d="M10.5 11.8h4.5M12 14.5h3.5" stroke="#5b92d9" stroke-width="1.2"/></svg>
<div class="abs" style="left:85.3px;top:1.5px;width:21.5px;height:20.5px;background:#d5e3f5;border:1px solid #4d8fdc;box-sizing:border-box"></div><svg class="abs" style="left:86.1px;top:1.5px" width="20" height="21" viewBox="0 0 20 21"><rect x="3" y="3.5" width="15" height="14" fill="#fcfcfc"/><rect x="3" y="3.5" width="15" height="3" fill="#dbe7f6"/><path d="M4 5h13" stroke="#5b92d9" stroke-width="1.2" stroke-dasharray="1.3 1"/><path d="M3 8h15M3 11h15M3 14h6" stroke="#5b92d9" stroke-width="1.3"/><path d="M10 12.5h8M10 15.5h8M13.5 11.5v6" stroke="#e8703a" stroke-width="1.3"/><path d="M3 17.5h15" stroke="#8aa9d6" stroke-width="1"/></svg>
<svg class="abs" style="left:107.3px;top:1.5px" width="20" height="21" viewBox="0 0 20 21"><rect x="5.5" y="11" width="2.8" height="6" fill="#5b92d9"/><rect x="9.5" y="8" width="2.8" height="9" fill="#5b92d9"/><rect x="13.5" y="5" width="2.8" height="12" fill="#5b92d9"/><path d="M3.5 17.8h14.5" stroke="#7aa3dc" stroke-width="1.2"/><path d="M3 4l3.5 3.5M6.5 4l-3.5 3.5" stroke="#e8781f" stroke-width="1.3"/></svg>
<div class="abs" style="left:127.7px;top:1.5px;width:21.5px;height:20.5px;background:#d5e3f5;border:1px solid #4d8fdc;box-sizing:border-box"></div><svg class="abs" style="left:128.5px;top:1.5px" width="20" height="21" viewBox="0 0 20 21"><rect x="5.5" y="11" width="2.8" height="6" fill="#5b92d9"/><rect x="9.5" y="8" width="2.8" height="9" fill="#5b92d9"/><rect x="13.5" y="5" width="2.8" height="12" fill="#5b92d9"/><path d="M3.5 17.8h14.5" stroke="#7aa3dc" stroke-width="1.2"/><path d="M3.5 6L6 8.5L10 4" fill="none" stroke="#e8781f" stroke-width="1.5"/></svg>
<svg class="abs" style="left:149.7px;top:1.5px" width="20" height="21" viewBox="0 0 20 21"><rect x="5.5" y="11" width="2.8" height="6" fill="#5b92d9"/><rect x="9.5" y="8" width="2.8" height="9" fill="#5b92d9"/><rect x="13.5" y="5" width="2.8" height="12" fill="#5b92d9"/><path d="M3.5 17.8h14.5" stroke="#7aa3dc" stroke-width="1.2"/></svg>
</div>
</div></body></html>
